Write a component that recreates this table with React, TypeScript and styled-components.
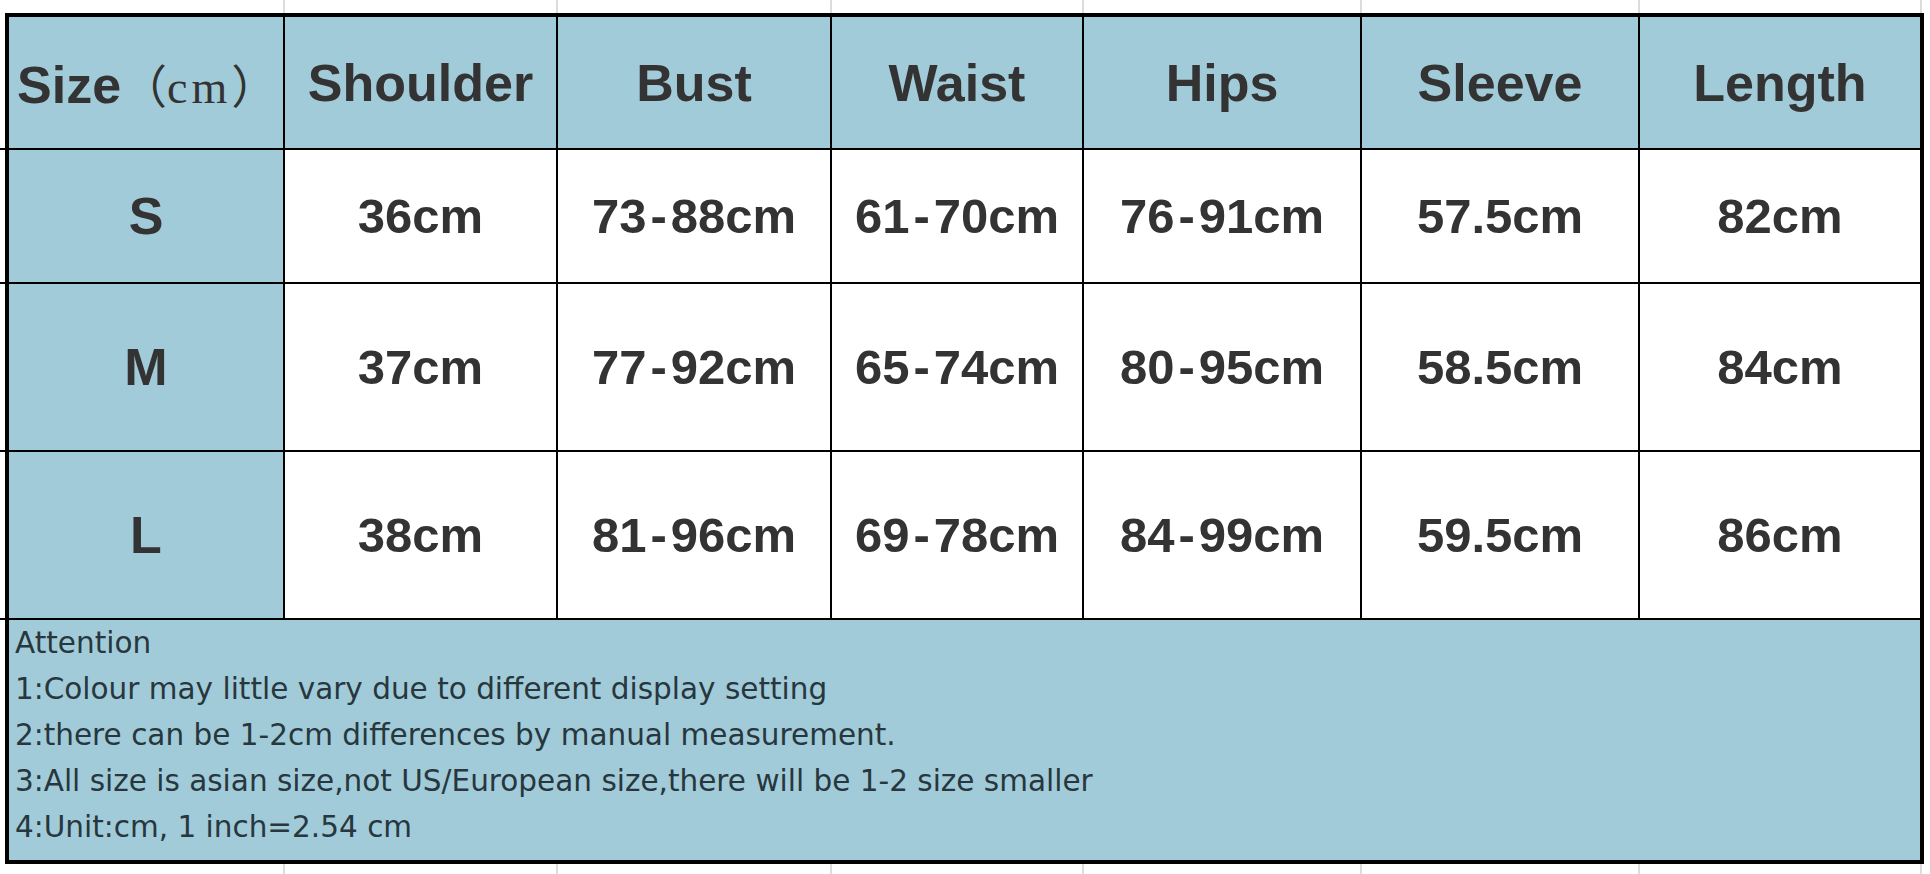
import styled, { createGlobalStyle } from "styled-components";

const COLUMNS = [274, 271, 272, 250, 276, 276, 280];
const ROWS = [131, 132, 166, 166, 240];
const BLUE = "#a2cbd9";
const INK = "#333333";

const HEADERS = ["Shoulder", "Bust", "Waist", "Hips", "Sleeve", "Length"];

const SIZES = [
  { size: "S", values: ["36cm", "73-88cm", "61-70cm", "76-91cm", "57.5cm", "82cm"] },
  { size: "M", values: ["37cm", "77-92cm", "65-74cm", "80-95cm", "58.5cm", "84cm"] },
  { size: "L", values: ["38cm", "81-96cm", "69-78cm", "84-99cm", "59.5cm", "86cm"] },
];

const NOTES = [
  "Attention",
  "1:Colour may little vary due to different display setting",
  "2:there can be 1-2cm differences by manual measurement.",
  "3:All size is asian size,not US/European size,there will be 1-2 size smaller",
  "4:Unit:cm, 1 inch=2.54 cm",
];

const columnTemplate = COLUMNS.map((w) => `${w}px`).join(" ");

// splits "73-88cm" so the dash can get its own spacing
function renderValue(value: string) {
  const parts = value.split("-");
  if (parts.length === 1) return value;
  return (
    <>
      {parts[0]}
      <Dash>-</Dash>
      {parts[1]}
    </>
  );
}

export default function App() {
  return (
    <>
      <GlobalStyle />
      <Sheet>
        <GuideStrip $height={13}>
          {COLUMNS.map((_, i) => (
            <GuideCell key={i} />
          ))}
        </GuideStrip>
        <Body>
          <Gutter>
            {ROWS.slice(0, 4).map((h, i) => (
              <GutterStep key={i} $height={h} />
            ))}
          </Gutter>
          <Table>
            <HeaderCell $align="start">
              <Label>
                Size
                <Unit>
                  （<UnitText>cm</UnitText>）
                </Unit>
              </Label>
            </HeaderCell>
            {HEADERS.map((title) => (
              <HeaderCell key={title}>{title}</HeaderCell>
            ))}
            {SIZES.map((row) => (
              <Row key={row.size}>
                <HeaderCell>{row.size}</HeaderCell>
                {row.values.map((value, i) => (
                  <ValueCell key={i}>{renderValue(value)}</ValueCell>
                ))}
              </Row>
            ))}
            <Notes>
              {NOTES.map((line) => (
                <NoteLine key={line}>{line}</NoteLine>
              ))}
            </Notes>
          </Table>
        </Body>
        <GuideStrip $height={10}>
          {COLUMNS.map((_, i) => (
            <GuideCell key={i} />
          ))}
        </GuideStrip>
      </Sheet>
    </>
  );
}

const GlobalStyle = createGlobalStyle`
  html, body {
    margin: 0;
    padding: 0;
    background: #ffffff;
  }
  body {
    width: 1930px;
    height: 874px;
    overflow: hidden;
  }
`;

const Sheet = styled.div`
  display: flex;
  flex-direction: column;
  width: 1930px;
  height: 874px;
  background: #ffffff;
`;

const GuideStrip = styled.div<{ $height: number }>`
  display: grid;
  grid-template-columns: ${columnTemplate};
  column-gap: 2px;
  width: fit-content;
  height: ${({ $height }) => $height}px;
  margin-left: 9px;
  padding-right: 2px;
  background: #dcdcdc;
`;

const GuideCell = styled.div`
  background: #ffffff;
`;

const Body = styled.div`
  display: flex;
`;

const Gutter = styled.div`
  display: flex;
  flex-direction: column;
  width: 5px;
  padding-top: 4px;
`;

const GutterStep = styled.div<{ $height: number }>`
  flex: none;
  height: ${({ $height }) => $height}px;
  border-bottom: 2px solid #000000;
`;

const Table = styled.div`
  display: grid;
  grid-template-columns: ${columnTemplate};
  grid-template-rows: ${ROWS.map((h) => `${h}px`).join(" ")};
  gap: 2px;
  border: 4px solid #000000;
  background: #000000;
`;

const Row = styled.div`
  display: contents;
`;

const HeaderCell = styled.div<{ $align?: "start" | "center" }>`
  display: flex;
  align-items: center;
  justify-content: ${({ $align }) => ($align === "start" ? "flex-start" : "center")};
  padding-left: ${({ $align }) => ($align === "start" ? "8px" : "0")};
  background: ${BLUE};
  color: ${INK};
  font: 700 52px "Liberation Sans", Arial, sans-serif;
  white-space: nowrap;
`;

const Label = styled.span`
  white-space: nowrap;
`;

const Unit = styled.span`
  font: 400 46px "Liberation Serif", "Noto Sans CJK SC", serif;
  color: ${INK};
`;

const UnitText = styled.span`
  letter-spacing: 4px;
`;

const ValueCell = styled.div`
  display: flex;
  align-items: center;
  justify-content: center;
  background: #ffffff;
  color: ${INK};
  font: 700 49px "Liberation Sans", Arial, sans-serif;
  white-space: nowrap;
`;

const Dash = styled.span`
  margin: 0 4px;
`;

const Notes = styled.div`
  grid-column: 1 / -1;
  display: flex;
  flex-direction: column;
  padding: 0 6px;
  background: ${BLUE};
  color: #27373d;
  font: 400 29.5px "DejaVu Sans", Verdana, sans-serif;
`;

const NoteLine = styled.div`
  height: 46px;
  line-height: 46px;
  white-space: nowrap;
`;
